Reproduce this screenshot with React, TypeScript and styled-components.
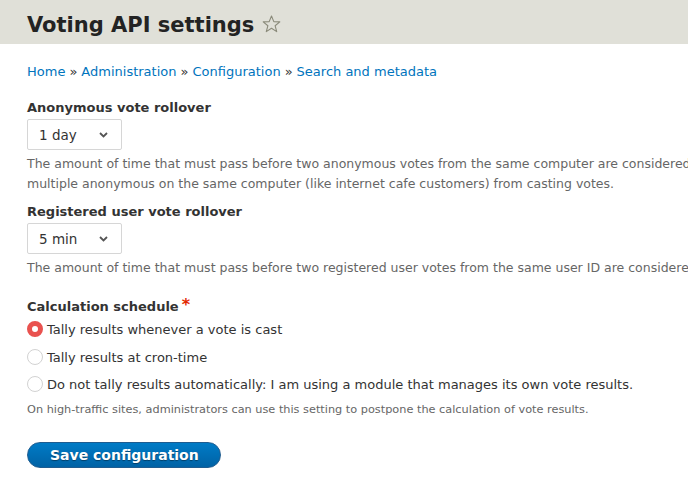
import React from 'react';
import styled, { createGlobalStyle } from 'styled-components';

const GlobalStyle = createGlobalStyle`
  html, body {
    margin: 0;
    padding: 0;
    background: #ffffff;
    overflow: hidden;
  }
  body {
    font-family: "DejaVu Sans", "Liberation Sans", sans-serif;
    color: #333333;
  }
`;

const Page = styled.div`
  width: 1500px;
`;

const Header = styled.header`
  display: flex;
  align-items: center;
  box-sizing: border-box;
  height: 44px;
  padding: 6px 27px 0;
  background: #e0e0d8;
`;

const Title = styled.h1`
  display: flex;
  align-items: center;
  gap: 8px;
  margin: 0;
  font-size: 21px;
  font-weight: bold;
  color: #232323;
`;

const StarButton = styled.span`
  display: inline-flex;
  width: 19px;
  height: 18px;
  margin-top: -3px;
`;

const Main = styled.main`
  padding: 0 27px;
  width: 1440px;
`;

const Breadcrumb = styled.nav`
  margin-top: 18px;
  font-size: 13px;
  line-height: 20px;
  color: #0074bd;
`;

const Crumb = styled.a`
  color: #0074bd;
  text-decoration: none;
`;

const Sep = styled.span`
  margin: 0 4px;
  color: #333333;
`;

const FormItem = styled.div<{ $top: number }>`
  margin-top: ${({ $top }) => $top}px;
`;

const Label = styled.div<{ $required?: boolean }>`
  font-size: 13px;
  font-weight: bold;
  line-height: 18px;
  color: #333333;

  &::after {
    content: ${({ $required }) => ($required ? "'*'" : 'none')};
    color: #e32700;
    margin-left: 3px;
    font-size: 16px;
    vertical-align: top;
    line-height: 14px;
  }
`;

const SelectBox = styled.div`
  display: flex;
  align-items: center;
  justify-content: space-between;
  box-sizing: border-box;
  width: 95px;
  height: 31px;
  margin-top: 2px;
  padding: 0 13px 0 11px;
  border: 1px solid #d6d6d6;
  border-radius: 2px;
  font-size: 13.5px;
  color: #333333;
  background: #ffffff;
`;

const Description = styled.div`
  margin-top: 4px;
  font-size: 12.5px;
  line-height: 20px;
  color: #666666;
  white-space: nowrap;
`;

const SmallDescription = styled.div`
  margin-top: 3px;
  font-size: 11.3px;
  line-height: 16px;
  color: #666666;
`;

const RadioRow = styled.label`
  display: flex;
  align-items: center;
  height: 27.5px;
  gap: 4px;
  font-size: 13px;
  color: #333333;
`;

const RadioDot = styled.span<{ $checked?: boolean }>`
  box-sizing: border-box;
  flex: none;
  width: 16px;
  height: 16px;
  border-radius: 50%;
  margin-top: -1px;
  background: #ffffff;
  border: ${({ $checked }) => ($checked ? '5px solid #e9524f' : '1px solid #d2d2d2')};
`;

const Actions = styled.div`
  margin-top: 24px;
`;

const PrimaryButton = styled.button`
  box-sizing: border-box;
  height: 26px;
  padding: 0 21px 0 22px;
  border: 1px solid #1e5c90;
  border-radius: 20px;
  background: linear-gradient(to bottom, #007bc6, #0062a5);
  color: #ffffff;
  font-family: "DejaVu Sans", "Liberation Sans", sans-serif;
  font-size: 14px;
  font-weight: bold;
  text-shadow: 0 1px 1px rgba(0, 0, 0, 0.4);
  cursor: pointer;
`;

const Chevron = () => (
  <svg width="9" height="6" viewBox="0 0 9 6">
    <polyline points="1,1 4.5,4.5 8,1" fill="none" stroke="#555555" strokeWidth="1.8" />
  </svg>
);

const Star = () => (
  <svg width="19" height="18" viewBox="0 0 19 18">
    <polygon
      points="9.5,1 11.8,6.6 17.8,6.9 13.1,10.7 14.7,16.6 9.5,13.3 4.3,16.6 5.9,10.7 1.2,6.9 7.2,6.6"
      fill="none"
      stroke="#8a8a7a"
      strokeWidth="1.1"
      strokeLinejoin="round"
    />
  </svg>
);

export default function App() {
  return (
    <Page>
      <GlobalStyle />
      <Header>
        <Title>
          Voting API settings
          <StarButton>
            <Star />
          </StarButton>
        </Title>
      </Header>
      <Main>
        <Breadcrumb>
          <Crumb href="#">Home</Crumb>
          <Sep>»</Sep>
          <Crumb href="#">Administration</Crumb>
          <Sep>»</Sep>
          <Crumb href="#">Configuration</Crumb>
          <Sep>»</Sep>
          <Crumb href="#">Search and metadata</Crumb>
        </Breadcrumb>

        <FormItem $top={17}>
          <Label>Anonymous vote rollover</Label>
          <SelectBox>
            1 day
            <Chevron />
          </SelectBox>
          <Description>
            The amount of time that must pass before two anonymous votes from the same computer are
            considered unique. Setting this to 'never' will eliminate most double-voting, but will
            make it impossible for
            <br />
            multiple anonymous on the same computer (like internet cafe customers) from casting
            votes.
          </Description>
        </FormItem>

        <FormItem $top={9}>
          <Label>Registered user vote rollover</Label>
          <SelectBox>
            5 min
            <Chevron />
          </SelectBox>
          <Description>
            The amount of time that must pass before two registered user votes from the same user ID
            are considered unique. Setting this to 'never' will eliminate most double-voting for
            registered users.
          </Description>
        </FormItem>

        <FormItem $top={20}>
          <Label $required>Calculation schedule</Label>
          <RadioRow>
            <RadioDot $checked />
            Tally results whenever a vote is cast
          </RadioRow>
          <RadioRow>
            <RadioDot />
            Tally results at cron-time
          </RadioRow>
          <RadioRow>
            <RadioDot />
            Do not tally results automatically: I am using a module that manages its own vote results.
          </RadioRow>
          <SmallDescription>
            On high-traffic sites, administrators can use this setting to postpone the calculation of
            vote results.
          </SmallDescription>
        </FormItem>

        <Actions>
          <PrimaryButton type="button">Save configuration</PrimaryButton>
        </Actions>
      </Main>
    </Page>
  );
}
